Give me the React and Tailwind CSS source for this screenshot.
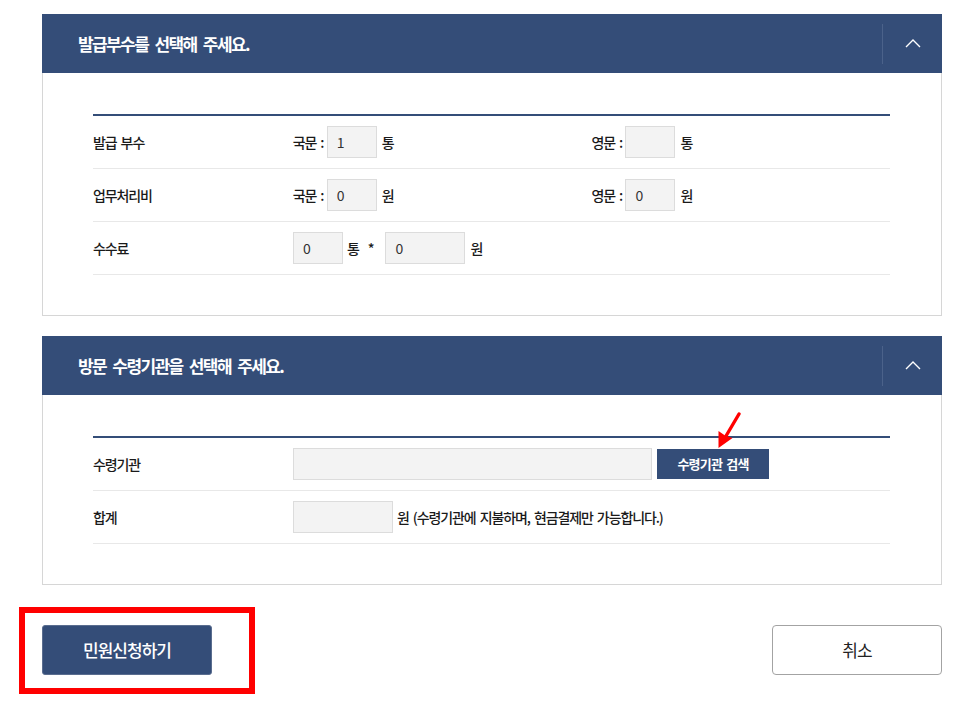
import React from 'react'

const navy = 'bg-[#344d78]'

function PanelHeader({ title }) {
  return (
    <div className={`h-[59px] ${navy} flex items-center`}>
      <h2 className="pl-[36px] text-[17px] font-bold text-white tracking-[-1.6px] [word-spacing:4px]">{title}</h2>
      <div className="ml-auto flex items-center h-full">
        <span className="w-px h-[40px] bg-[#4b628a]" />
        <div className="w-[59px] flex justify-center">
          <svg width="16" height="9" viewBox="0 0 16 9" fill="none">
            <polyline points="1,8 8,1 15,8" stroke="#fff" strokeWidth="1.4" />
          </svg>
        </div>
      </div>
    </div>
  )
}

function Box({ value = '', w = 'w-[50px]' }) {
  return (
    <div className={`${w} h-[32px] bg-[#f3f3f3] border border-[#dcdcdc] flex items-center pl-[9px] text-[14px] font-normal text-[#333] tracking-normal`}>
      {value}
    </div>
  )
}

const txt = 'text-[14px] font-medium text-[#1a1a1a] tracking-[-1.1px] [word-spacing:2px]'

function Row({ label, children }) {
  return (
    <div className="h-[53px] border-b border-[#e8e8e8] flex items-center">
      <div className={`w-[200px] ${txt}`}>{label}</div>
      {children}
    </div>
  )
}

function Pair({ name, value, unit }) {
  return (
    <div className={`w-[299px] flex items-center ${txt}`}>
      <span className="w-[34px] whitespace-nowrap">{name} :</span>
      <Box value={value} />
      <span className="ml-[5px]">{unit}</span>
    </div>
  )
}

export default function App() {
  return (
    <div className="w-[972px] h-[704px] bg-white pt-[14px] font-['Noto_Sans_CJK_KR',sans-serif]">
      <section className="ml-[42px] w-[900px]">
        <PanelHeader title="발급부수를 선택해 주세요." />
        <div className="border border-t-0 border-[#d6d6d6] pl-[50px] pr-[51px] pt-[41px] pb-[40px]">
          <div className="border-t-2 border-[#344d78]">
            <Row label="발급 부수">
              <Pair name="국문" value="1" unit="통" />
              <Pair name="영문" value="" unit="통" />
            </Row>
            <Row label="업무처리비">
              <Pair name="국문" value="0" unit="원" />
              <Pair name="영문" value="0" unit="원" />
            </Row>
            <Row label="수수료">
              <div className={`flex items-center ${txt}`}>
                <Box value="0" />
                <span className="ml-[4px]">통</span>
                <span className="ml-[9px] mr-[12px]">*</span>
                <Box value="0" w="w-[80px]" />
                <span className="ml-[5px]">원</span>
              </div>
            </Row>
          </div>
        </div>
      </section>

      <section className="ml-[42px] w-[900px] mt-[20px]">
        <PanelHeader title="방문 수령기관을 선택해 주세요." />
        <div className="border border-t-0 border-[#d6d6d6] pl-[50px] pr-[51px] pt-[41px] pb-[40px]">
          <div className="border-t-2 border-[#344d78]">
            <Row label="수령기관">
              <Box w="w-[359px]" />
              <div className="relative ml-[5px]">
                <button className={`w-[112px] h-[30px] ${navy} text-white text-[13px] font-bold tracking-[-0.8px] [word-spacing:2px]`}>
                  수령기관 검색
                </button>
                <svg className="absolute left-[57px] top-[-37px]" width="30" height="40" viewBox="0 0 30 40" fill="none">
                  <line x1="25" y1="2" x2="12" y2="24" stroke="#ff0000" strokeWidth="3.4" strokeLinecap="round" />
                  <polygon points="4.5,36 4.5,19 11,23.5 18.5,26" fill="#ff0000" />
                </svg>
              </div>
            </Row>
            <Row label="합계">
              <Box w="w-[100px]" />
              <span className={`ml-[4px] ${txt}`}>
                원 (수령기관에 지불하며, 현금결제만 가능합니다.)
              </span>
            </Row>
          </div>
        </div>
      </section>

      <div className="ml-[42px] w-[900px] mt-[40px] flex justify-between">
        <div className="relative">
          <button className={`w-[170px] h-[50px] ${navy} rounded-[3px] border border-[#5a6d8f] text-white text-[17px] font-medium tracking-[-1px]`}>
            민원신청하기
          </button>
          <div className="absolute left-[-23px] top-[-18px] w-[236px] h-[87px] border-[6px] border-[#ff0000]" />
        </div>
        <button className="w-[170px] h-[50px] bg-white rounded-[4px] border border-[#a3a3a3] text-[#222] text-[17px] tracking-[-1px]">
          취소
        </button>
      </div>
    </div>
  )
}
